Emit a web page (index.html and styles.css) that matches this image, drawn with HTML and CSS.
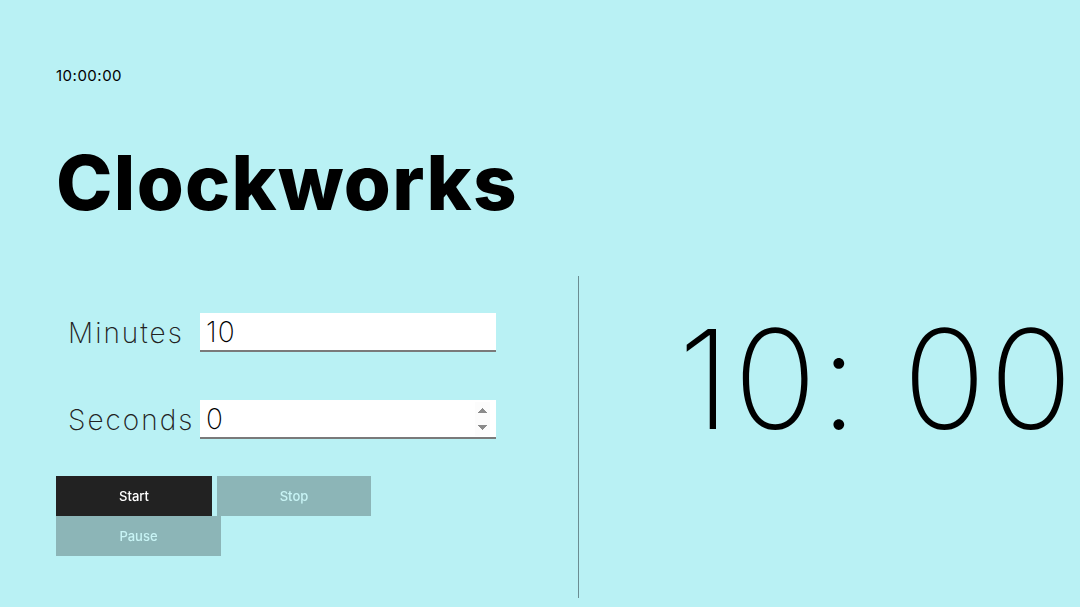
FILE: index.html
```html
<!DOCTYPE html>
<html>
<head>
<meta charset="utf-8">
<link rel="stylesheet" href="styles.css">
</head>
<body>
<div class="page">
  <div class="now">10:00:00</div>
  <h1 class="title">Clockworks</h1>
  <div class="main">
    <div class="left">
      <div class="row row-first">
        <label class="label" for="min">Minutes</label>
        <input class="field" id="min" type="number" value="10">
      </div>
      <div class="row row-second">
        <label class="label" for="sec">Seconds</label>
        <input class="field" id="sec" type="number" value="0" autofocus>
      </div>
      <div class="buttons">
        <button class="btn btn-start">Start</button>
        <button class="btn btn-stop">Stop</button>
        <button class="btn btn-pause">Pause</button>
      </div>
    </div>
    <div class="right">
      <div class="big">10: 00</div>
    </div>
  </div>
</div>
</body>
</html>
```
FILE: styles.css
```css
html, body {
  margin: 0;
  padding: 0;
  background: #b9f1f4;
  height: 100%;
  overflow: hidden;
}
body {
  font-family: Inter, "Open Sans", sans-serif;
  color: #000;
}
.page {
  padding-left: 56px;
}
.now {
  padding-top: 66px;
  font-size: 15px;
  line-height: 20px;
  font-weight: 400;
  letter-spacing: 0.5px;
}
.title {
  margin: 56px 0 0 0;
  font-size: 76px;
  line-height: 80px;
  font-weight: 800;
  letter-spacing: 1.3px;
}
.main {
  display: flex;
  margin-top: 54px;
  height: 322px;
}
.left {
  width: 523px;
  border-right: 1px solid #6b8d92;
  box-sizing: border-box;
}
.row {
  display: flex;
  align-items: center;
  padding-left: 12px;
}
.row-first {
  margin-top: 37px;
}
.row-second {
  margin-top: 48px;
}
.label {
  width: 132px;
  font-size: 28px;
  font-weight: 200;
  color: #222;
  letter-spacing: 2px;
}
.field {
  width: 296px;
  height: 39px;
  box-sizing: border-box;
  border: none;
  border-bottom: 2px solid #7a7a7a;
  background: #fff;
  font-family: inherit;
  font-size: 28px;
  font-weight: 200;
  padding: 0 6px;
  outline: none;
  color: #000;
  letter-spacing: 1px;
}
.buttons {
  display: flex;
  flex-wrap: wrap;
  margin-top: 37px;
  width: 330px;
}
.btn {
  height: 40px;
  border: none;
  font-family: inherit;
  font-size: 13px;
  font-weight: 500;
  padding: 0;
  cursor: pointer;
}
.btn-start {
  width: 156px;
  background: #222;
  color: #fff;
}
.btn-stop {
  width: 154px;
  margin-left: 5px;
  background: #8cb5b7;
  color: #c8f4f5;
}
.btn-pause {
  width: 165px;
  background: #8cb5b7;
  color: #c8f4f5;
}
.right {
  flex: 1;
  padding-left: 99px;
}
.big {
  margin-top: 23px;
  font-size: 138px;
  font-weight: 200;
  white-space: nowrap;
  line-height: 160px;
  letter-spacing: 3px;
}
```
